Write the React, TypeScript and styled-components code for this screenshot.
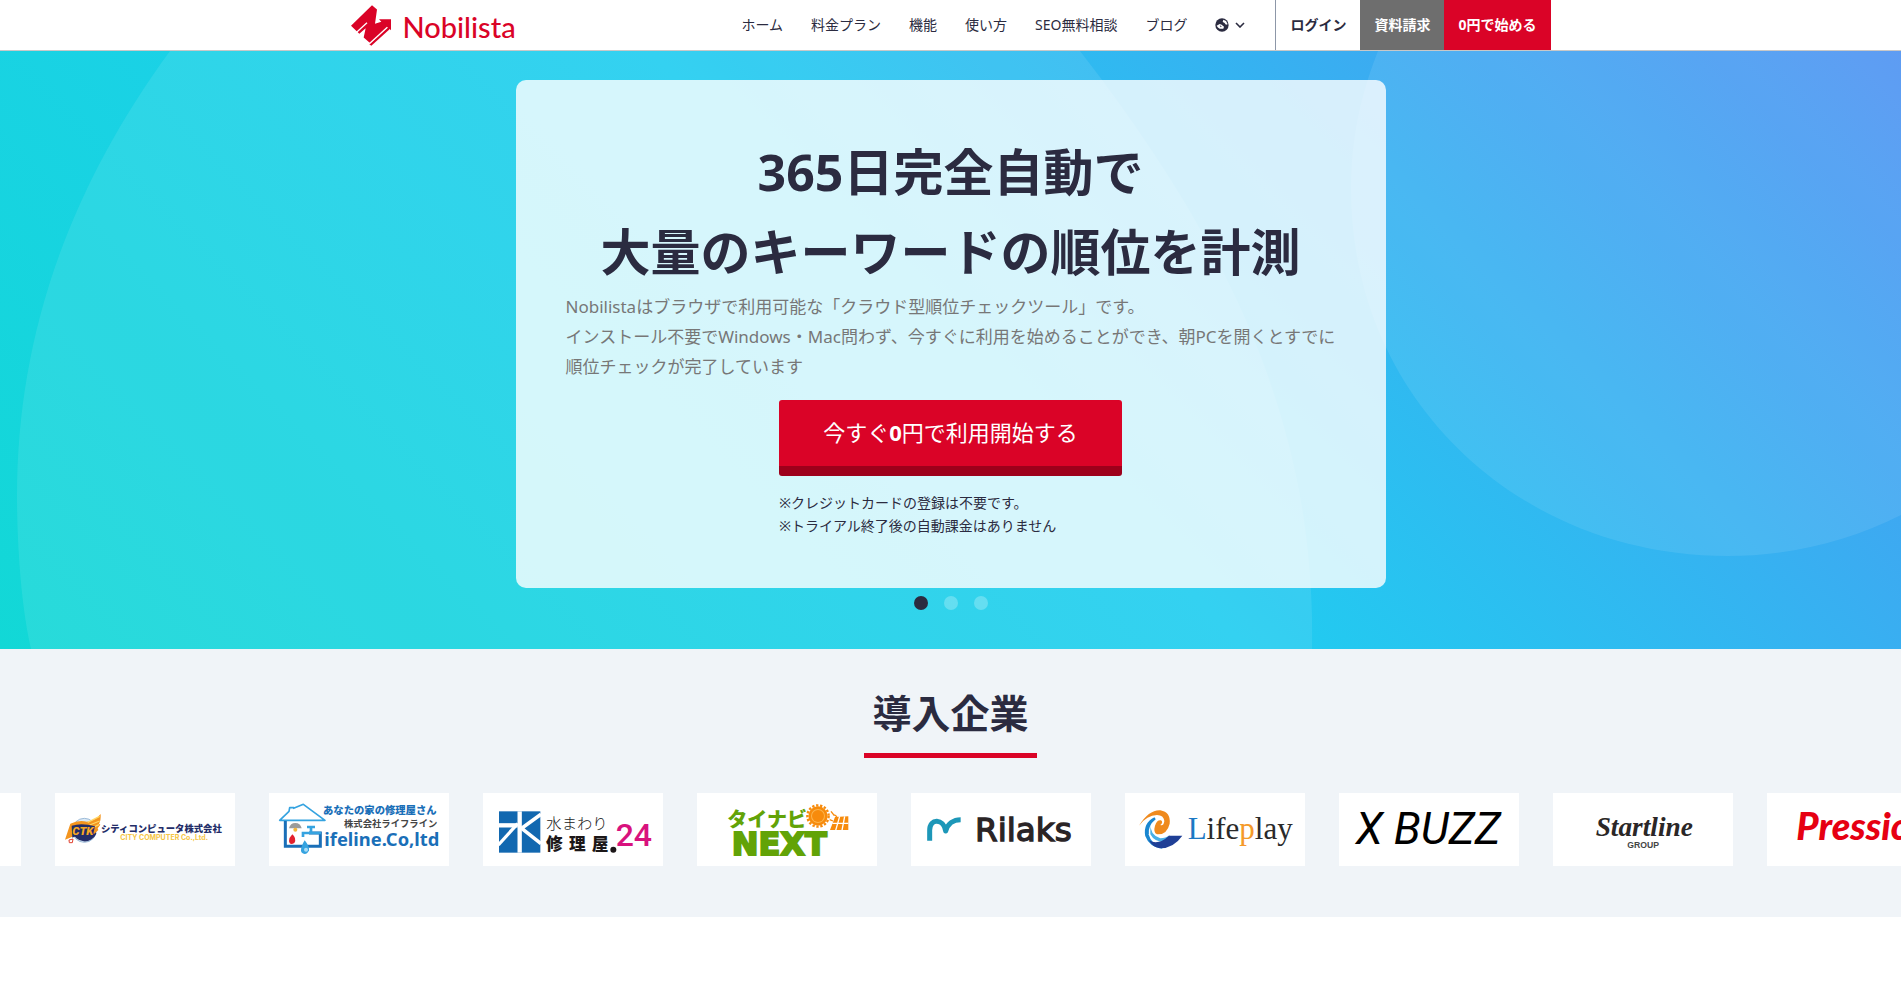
import React from "react";
import styled, { createGlobalStyle, css } from "styled-components";

const color = {
  red: "#da0327",
  darkRed: "#9d001b",
  ink: "#2b2b40",
  gray: "#6e6e6e",
  pale: "#f0f4f8",
};

const GlobalStyle = createGlobalStyle`
  *, *::before, *::after { box-sizing: border-box; }
  body {
    margin: 0;
    background: #fff;
    color: ${color.ink};
    font-family: "Noto Sans", "Noto Sans CJK JP", sans-serif;
    font-size: 14px;
    overflow-x: hidden;
  }
  h1, h2, p, ul { margin: 0; padding: 0; }
  a { color: inherit; text-decoration: none; }
  button { font: inherit; color: inherit; border: 0; background: none; padding: 0; cursor: pointer; }
`;

/* ---------- header ---------- */

const Header = styled.header`
  background: #fff;
  border-bottom: 1px solid #c8c8c8;
`;

const HeaderInner = styled.div`
  display: flex;
  align-items: center;
  justify-content: space-between;
  max-width: 1200px;
  height: 50px;
  margin: 0 auto;
`;

const Brand = styled.a`
  display: flex;
  align-items: center;
  gap: 12px;
  color: ${color.red};
  font-family: Lato, "Liberation Sans", sans-serif;
  font-size: 29px;
  line-height: 50px;
  font-weight: 500;
`;

const BrandName = styled.span`
  padding-top: 4px;
`;

const Nav = styled.nav`
  display: flex;
  align-items: stretch;
  height: 50px;
`;

const Menu = styled.ul`
  display: flex;
  list-style: none;
  margin-right: 16px;
`;

const itemBox = css`
  display: flex;
  align-items: center;
  height: 50px;
  padding: 0 14px;
  font-size: 14px;
  line-height: 20px;
  white-space: nowrap;
`;

const MenuLink = styled.a`
  ${itemBox}
`;

const LangButton = styled.button`
  ${itemBox}
  gap: 6px;
`;

const ActionLink = styled.a<{ $bg?: string; $fg?: string; $divider?: boolean }>`
  ${itemBox}
  font-weight: 700;
  background: ${(p) => p.$bg ?? "transparent"};
  color: ${(p) => p.$fg ?? color.ink};
  border-left: ${(p) => (p.$divider ? "1px solid #8d97a8" : "0")};
`;

/* ---------- hero ---------- */

const Hero = styled.section`
  position: relative;
  padding: 29px 16px 39px;
  background: linear-gradient(45deg, #12d8d6 0%, #20cdf0 50%, #4f93f2 100%);
`;

const HeroShapes = styled.svg`
  position: absolute;
  inset: 0;
  width: 100%;
  height: 100%;
`;

const HeroCard = styled.div`
  position: relative;
  max-width: 870px;
  margin: 0 auto;
  padding: 52px 50px 51px;
  border-radius: 10px;
  background: rgba(255, 255, 255, 0.8);
`;

const HeroTitle = styled.h1`
  font-size: 50px;
  line-height: 80px;
  font-weight: 700;
  text-align: center;
`;

const HeroText = styled.p`
  margin-right: -6px;
  color: #777;
  font-size: 17px;
  line-height: 30px;
`;

const Cta = styled.div`
  width: fit-content;
  margin: 18px auto 0;
`;

const CtaButton = styled.a`
  display: block;
  padding: 0 44px 2px;
  border-bottom: 10px solid ${color.darkRed};
  border-radius: 3px;
  background: ${color.red};
  color: #fff;
  font-size: 22px;
  line-height: 64px;
  text-align: center;
`;

const CtaNote = styled.p`
  margin-top: 15px;
  font-size: 14px;
  line-height: 23px;
`;

const Dots = styled.div`
  position: relative;
  display: flex;
  justify-content: center;
  gap: 16px;
  margin-top: 8px;
`;

const Dot = styled.button<{ $active?: boolean }>`
  width: 14px;
  height: 14px;
  border-radius: 50%;
  background: ${(p) => (p.$active ? color.ink : "rgba(255, 255, 255, 0.25)")};
`;

/* ---------- clients ---------- */

const Clients = styled.section`
  padding: 35px 0 51px;
  background: ${color.pale};
  overflow: hidden;
`;

const ClientsTitle = styled.h2`
  width: fit-content;
  margin: 0 auto 35px;
  padding: 0 8px 11px;
  border-bottom: 5px solid ${color.red};
  font-size: 39px;
  line-height: 58px;
  font-weight: 700;
`;

const Track = styled.ul`
  display: flex;
  gap: 34px;
  margin-left: -159px;
  list-style: none;
`;

const LogoCard = styled.li`
  flex: 0 0 180px;
  height: 73px;
  background: #fff;

  svg {
    display: block;
    width: 180px;
    height: 73px;
  }
`;

const jp = '"Noto Sans CJK JP", sans-serif';

const Logo = ({ label, children }: { label: string; children: React.ReactNode }) => (
  <LogoCard>
    <svg viewBox="0 0 540 219" role="img" aria-label={label}>
      {children}
    </svg>
  </LogoCard>
);

const BrandMark = () => (
  <svg width="40" height="41" viewBox="63 15 120 122" aria-hidden="true">
    <g fill={color.red}>
      <path d="M63 77 L126 15 L141 28 L135 71 L154 65 L147 57 H183 V90 L174 81 L121 129 L101 112 L107 84 L88 101 Z" />
      <path d="M118 132 L124 137 L182 84 L177 78 Z" />
    </g>
    <g stroke="#fff" strokeWidth="4" fill="none">
      <path d="M79 97 L111 68" />
      <path d="M118 131 L172 81" />
    </g>
  </svg>
);

const GlobeIcon = () => (
  <svg width="14" height="14" viewBox="0 0 42 42" aria-hidden="true">
    <circle cx="21" cy="21" r="20" fill={color.ink} />
    <path d="M25 5 L33 9 L38 19 L33 20 L28 14 L23 12 Z" fill="#fff" />
    <path d="M5 23 L14 18 L20 20 L27 26 L25 32 L14 32 Q8 29 5 23 Z" fill="#fff" />
    <path d="M14 22 L20 25 L17 28 Z" fill={color.ink} />
  </svg>
);

const ChevronIcon = () => (
  <svg width="10" height="6" viewBox="0 0 10 6" fill="none" stroke={color.ink} strokeWidth="1.6" aria-hidden="true">
    <path d="M1 1 L5 5 L9 1" />
  </svg>
);

const menu = ["ホーム", "料金プラン", "機能", "使い方", "SEO無料相談", "ブログ"];

export default function App() {
  return (
    <>
      <GlobalStyle />
      <Header>
        <HeaderInner>
          <Brand href="#">
            <BrandMark />
            <BrandName>Nobilista</BrandName>
          </Brand>
          <Nav aria-label="メイン">
            <Menu>
              {menu.map((m) => (
                <li key={m}>
                  <MenuLink href="#">{m}</MenuLink>
                </li>
              ))}
              <li>
                <LangButton type="button" aria-label="言語">
                  <GlobeIcon />
                  <ChevronIcon />
                </LangButton>
              </li>
            </Menu>
            <ActionLink href="#" $divider>ログイン</ActionLink>
            <ActionLink href="#" $bg={color.gray} $fg="#fff">資料請求</ActionLink>
            <ActionLink href="#" $bg={color.red} $fg="#fff">0円で始める</ActionLink>
          </Nav>
        </HeaderInner>
      </Header>

      <main>
        <Hero>
          <HeroShapes viewBox="0 0 1901 598" preserveAspectRatio="none" aria-hidden="true">
            <g fill="#fff" fillOpacity="0.09">
              <path d="M170 0 C60 150 17 300 17 444 C17 500 22 560 31 598 H1312 C1316 380 1235 200 1080 0 Z" />
              <path d="M1378 0 C1356 55 1351 100 1351 139 C1351 345 1515 505 1728 505 C1790 505 1850 490 1901 464 V0 Z" />
            </g>
          </HeroShapes>
          <HeroCard>
            <HeroTitle>
              365日完全自動で
              <br />
              大量のキーワードの順位を計測
            </HeroTitle>
            <HeroText>
              Nobilistaはブラウザで利用可能な「クラウド型順位チェックツール」です。
              <br />
              インストール不要でWindows・Mac問わず、今すぐに利用を始めることができ、朝PCを開くとすでに順位チェックが完了しています
            </HeroText>
            <Cta>
              <CtaButton href="#">
                今すぐ<b>0</b>円で利用開始する
              </CtaButton>
              <CtaNote>
                ※クレジットカードの登録は不要です。
                <br />
                ※トライアル終了後の自動課金はありません
              </CtaNote>
            </Cta>
          </HeroCard>
          <Dots>
            <Dot type="button" aria-label="1" $active />
            <Dot type="button" aria-label="2" />
            <Dot type="button" aria-label="3" />
          </Dots>
        </Hero>

        <Clients>
          <ClientsTitle>導入企業</ClientsTitle>
          <Track>
            <LogoCard />

            <Logo label="シティコンピュータ株式会社">
              <circle cx="88" cy="112" r="36" fill="#dceaf6" stroke="#9dbbd8" strokeWidth="3" />
              <path d="M52 116 A38 38 0 0 0 124 122 L118 108 L58 122 Z" fill="#232d68" />
              <path d="M30 140 L46 92 Q70 80 96 86 Q122 82 137 63 Q138 84 132 92 L136 95 L128 106 L130 111 L118 122 Q80 118 30 140 Z" fill="#f4951f" />
              <path d="M98 88 L134 70 M104 96 L134 84 M110 105 L132 95" stroke="#ffd766" strokeWidth="4" />
              <path d="M50 98 Q80 88 120 100 L114 126 Q80 120 52 134 Z" fill="#232d68" />
              <text x="52" y="127" fontFamily="Roboto, sans-serif" fontWeight="900" fontStyle="italic" fontSize="34" fill="#f7a823">CTK</text>
              <path d="M42 141 L54 138 L52 149 L43 149 Z" fill="#fff" stroke="#e0402e" strokeWidth="3" />
              <text x="138" y="117" fontFamily={jp} fontWeight="900" fontSize="28" fill="#232d68">シティコンピュータ株式会社</text>
              <text x="196" y="140" fontFamily="Inter, sans-serif" fontWeight="700" fontSize="21" fill="#f5c645">CITY COMPUTER Co.,Ltd.</text>
            </Logo>

            <Logo label="株式会社ライフライン">
              <path d="M32 82 L60 55 L62 44 H74 V46 L103 34 L168 82 Z" fill="#fff" stroke="#35a3e0" strokeWidth="5" strokeLinejoin="round" />
              <path d="M49 84 V160 H154 V120 H120" fill="none" stroke="#1a6fb8" strokeWidth="9" />
              <path d="M102 132 V120 H156 M126 120 V104 M114 102 H138" fill="none" stroke="#35a3e0" strokeWidth="8" />
              <path d="M60 106 Q64 90 79 90 Q94 90 98 106 Z" fill="#9a9a9a" />
              <circle cx="79" cy="110" r="6" fill="#f4b63a" />
              <path d="M70 124 Q84 136 76 150 Q62 158 60 144 Q60 134 70 124 Z" fill="#e3202c" />
              <path d="M107 142 Q122 160 120 172 Q116 183 107 183 Q96 182 96 172 Q96 160 107 142 Z" fill="#35a3e0" />
              <circle cx="111" cy="170" r="6" fill="#a9dcf5" />
              <text x="162" y="62" fontFamily={jp} fontWeight="900" fontSize="31" fill="#1a6fb8">あなたの家の修理屋さん</text>
              <text x="225" y="101" fontFamily={jp} fontWeight="700" fontSize="28" fill="#444">株式会社ライフライン</text>
              <text x="166" y="160" fontFamily='"Noto Sans", sans-serif' fontWeight="700" fontSize="55" fill="#1a6fb8">ifeline.Co,ltd</text>
            </Logo>

            <Logo label="水まわり修理屋24">
              <rect x="48" y="55" width="124" height="124" fill="#1268b0" />
              <g stroke="#fff" fill="none">
                <path d="M110 55 V179" strokeWidth="13" />
                <path d="M48 97 H104" strokeWidth="13" />
                <path d="M104 92 L46 156" strokeWidth="10" />
                <path d="M174 64 L116 106 L174 152" strokeWidth="11" />
              </g>
              <text x="190" y="107" fontFamily={jp} fontWeight="300" fontSize="46" fill="#222">水まわり</text>
              <g fontFamily={jp} fontWeight="900" fontSize="50" fill="#1c1718">
                <text x="189" y="171">修</text>
                <text x="258" y="171">理</text>
                <text x="326" y="171">屋</text>
              </g>
              <circle cx="391" cy="170" r="9" fill="#1c1718" />
              <text x="398" y="160" fontFamily="Roboto, sans-serif" fontWeight="500" fontSize="96" fill="#d8127d">24</text>
            </Logo>

            <Logo label="タイナビNEXT">
              <text x="91" y="101" fontFamily={jp} fontWeight="900" fontSize="60" fill="#62a307">タイナビ</text>
              <circle cx="363" cy="69" r="32" fill="none" stroke="#f78b0c" strokeWidth="7" strokeDasharray="7 5" />
              <circle cx="363" cy="69" r="25" fill="#fbb54e" stroke="#f78b0c" strokeWidth="8" />
              <circle cx="363" cy="69" r="18" fill="#f78b0c" />
              <path d="M402 55 L412 68 M398 80 L408 84 M412 65 L420 71" stroke="#f78b0c" strokeWidth="4" />
              <path d="M414 72 L454 70 V111 H399 Z" fill="#f78b0c" />
              <path d="M406 91 H454 M428 70 L416 112 M443 70 L435 112" stroke="#fff" strokeWidth="4" />
              <text x="104" y="187" fontFamily='"DejaVu Sans", sans-serif' fontWeight="700" fontSize="96" fill="#62a307" stroke="#62a307" strokeWidth="6">NEXT</text>
            </Logo>

            <Logo label="Rilaks">
              <path d="M56 143 V112 C56 74 98 76 104 114 C110 92 128 80 149 80" fill="none" stroke="#1d97b8" strokeWidth="15" strokeLinejoin="round" />
              <text x="192" y="143" fontFamily='"DejaVu Sans", sans-serif' fontSize="98" fill="#2a2426" stroke="#2a2426" strokeWidth="4">Rilaks</text>
            </Logo>

            <Logo label="Lifeplay">
              <path d="M42 98 Q72 50 106 52 Q138 58 134 92 Q126 126 96 124 Q84 118 90 98 Q96 80 108 82 Q116 88 106 96 Q116 100 118 84 Q116 66 96 66 Q66 66 42 98 Z" fill="#ef8a1e" />
              <path d="M90 76 Q64 96 68 126 Q76 158 112 164 Q76 160 64 128 Q58 92 90 76 Z" fill="#1a86d0" stroke="#1a86d0" strokeWidth="7" />
              <path d="M76 90 Q74 126 106 136 Q122 136 134 126 L124 146 Q90 150 76 124 Z" fill="#48b0e8" />
              <path d="M72 142 Q100 158 132 128 H172 Q146 166 104 166 Q82 162 72 142 Z" fill="#1f3f96" />
              <text x="188" y="138" fontFamily='"Liberation Serif", serif' fontSize="93" fill="#2a2a2a">
                <tspan fill="#1c78c4">L</tspan>ife<tspan fill="#f59a2a">p</tspan>lay
              </text>
            </Logo>

            <Logo label="X BUZZ">
              <text x="50" y="154" fontFamily="Roboto, sans-serif" fontStyle="italic" fontSize="134" fill="#000">X BUZZ</text>
            </Logo>

            <Logo label="Startline GROUP">
              <text x="128" y="128" fontFamily='"Liberation Serif", serif' fontStyle="italic" fontWeight="700" fontSize="82" fill="#2b2727">Startline</text>
              <text x="223" y="166" fontFamily='"Liberation Sans", sans-serif' fontWeight="700" fontSize="26" fill="#444">GROUP</text>
            </Logo>

            <Logo label="Pressio">
              <text x="88" y="140" fontFamily="Lato, sans-serif" fontStyle="italic" fontWeight="900" fontSize="114" fill="#e60012">Pressio</text>
            </Logo>
          </Track>
        </Clients>
      </main>
    </>
  );
}
